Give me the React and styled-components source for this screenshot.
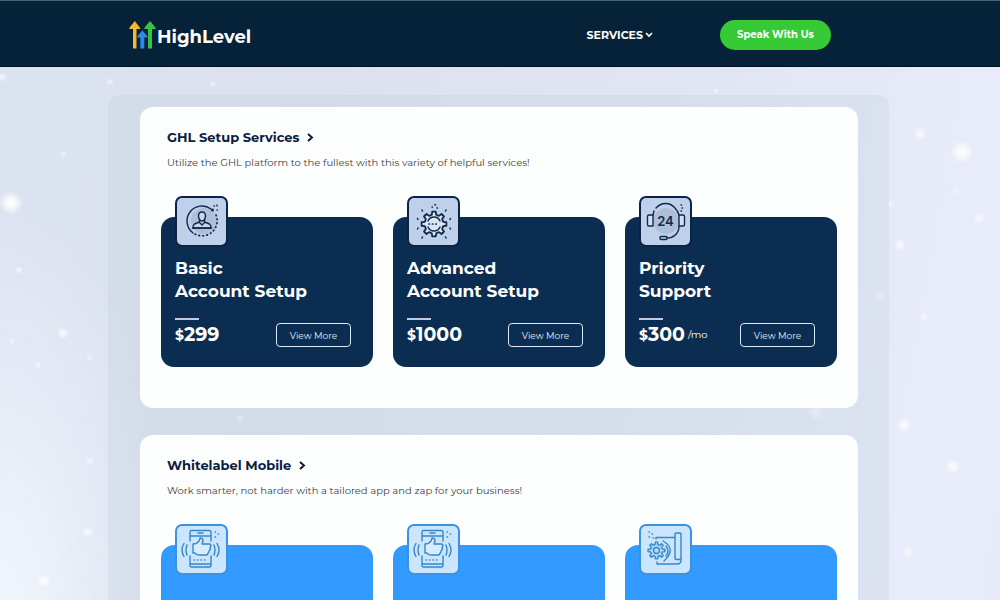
import React from "react";
import styled, { createGlobalStyle } from "styled-components";

const Global = createGlobalStyle`
  *, *::before, *::after { box-sizing: border-box; }
  body {
    margin: 0;
    font-family: Montserrat, Inter, "Open Sans", sans-serif;
    background: #e3e8f5;
  }
  h1, h2, h3, p { margin: 0; }
`;

const sparkles = [
  [2, 77, 5, 0.6], [110, 82, 4, 0.5], [213, 84, 4, 0.4], [63, 154, 4, 0.4],
  [11, 203, 12, 0.9], [19, 270, 4, 0.6], [63, 333, 6, 0.6], [12, 341, 4, 0.4],
  [38, 365, 4, 0.4], [90, 358, 4, 0.4], [157, 406, 4, 0.4], [240, 418, 4, 0.5],
  [90, 461, 5, 0.4], [88, 532, 6, 0.5], [44, 581, 7, 0.7], [716, 91, 3, 0.5],
  [920, 134, 7, 0.6], [962, 152, 12, 0.8], [956, 190, 5, 0.4], [979, 218, 6, 0.5],
  [890, 204, 4, 0.5], [900, 245, 6, 0.6], [880, 296, 7, 0.5], [924, 317, 5, 0.6],
  [904, 425, 8, 0.7], [953, 466, 8, 0.7], [816, 412, 9, 0.5], [908, 552, 7, 0.5],
];

const sparkleLayers = sparkles
  .map(([x, y, r, a]) =>
    `radial-gradient(circle at ${x / 10}% ${y}px, rgba(255,255,255,${a}) 0, rgba(255,255,255,${a}) ${Math.round(r / 4)}px, rgba(255,255,255,0) ${r}px)`)
  .join(",");

const Page = styled.div`
  min-height: 100vh;
  background:
    ${sparkleLayers},
    radial-gradient(ellipse 180px 420px at 0 620px, rgba(242,247,254,0.95) 0, rgba(240,245,253,0) 100%),
    linear-gradient(100deg, #dce3f0 0%, #dbe1ee 30%, #dfe5f1 60%, #e8ebf9 88%, #e7ebf8 100%);
`;

const Header = styled.header`
  display: flex;
  align-items: center;
  justify-content: space-between;
  height: 67px;
  padding: 2px 169px 0 129px;
  background: #062239;
  border-top: 1px solid #4b6673;
  border-bottom: 1px solid #02121f;
`;

const Logo = styled.a`
  display: flex;
  align-items: flex-end;
  gap: 1px;
  color: #fff;
  font-size: 18px;
  font-weight: 700;
  line-height: 23px;
  text-decoration: none;
`;

const Nav = styled.nav`
  display: flex;
  align-items: center;
  gap: 67px;
`;

const MenuButton = styled.button`
  display: flex;
  align-items: center;
  gap: 2px;
  padding: 0;
  border: 0;
  background: none;
  color: #fff;
  font: inherit;
  font-size: 11px;
  font-weight: 700;
`;

const ContactButton = styled.button`
  width: 111px;
  height: 30px;
  padding: 0;
  border: 0;
  border-radius: 15px;
  background: #37ca37;
  color: #fff;
  font: inherit;
  font-size: 10px;
  font-weight: 700;
`;

const Main = styled.main`
  padding: 28px 111px 0 108px;
`;

const Panel = styled.div`
  display: flex;
  flex-direction: column;
  gap: 27px;
  padding: 12px 31px 27px 32px;
  border-radius: 12px;
  background: rgba(190, 203, 220, 0.28);
`;

const Section = styled.section`
  padding: 20px 21px 41px;
  border-radius: 13px;
  background: #fdfefe;
`;

const SectionHead = styled.div`
  padding: 0 6px;
`;

const SectionTitle = styled.h2`
  display: flex;
  align-items: center;
  gap: 8px;
  color: #0c1c3d;
  font-size: 13px;
  font-weight: 700;
  line-height: 20px;
`;

const SectionText = styled.p`
  margin-top: 8px;
  color: #3c3f45;
  font-size: 10px;
  font-weight: 400;
  line-height: 16px;
`;

const Cards = styled.div`
  display: grid;
  grid-template-columns: repeat(3, 1fr);
  align-items: start;
  gap: 20px;
  margin-top: 46px;
`;

const Card = styled.article`
  position: relative;
  min-height: 150px;
  padding: 40px 22px 19px 14px;
  border-radius: 13px;
  background: ${(p) => (p.$tone === "blue" ? "#339aff" : "#0b2d51")};
`;

const IconTile = styled.div`
  position: absolute;
  top: -21px;
  left: 14px;
  width: 53px;
  height: 51px;
  border: 2px solid ${(p) => (p.$tone === "blue" ? "#3a92e4" : "#0b2345")};
  border-radius: 7px;
  background: ${(p) => (p.$tone === "blue" ? "#cae5fd" : "#bfd0ea")};
  color: ${(p) => (p.$tone === "blue" ? "#3488c8" : "#10284c")};
  svg { display: block; width: 49px; height: 47px; }
`;

const CardTitle = styled.h3`
  color: #fff;
  font-size: 17px;
  font-weight: 700;
  line-height: 23px;
`;

const Rule = styled.div`
  width: 24px;
  height: 2px;
  margin-top: 15px;
  background: #c4c9e0;
`;

const Offer = styled.div`
  display: flex;
  align-items: center;
  justify-content: space-between;
  margin-top: 2px;
`;

const Price = styled.p`
  display: flex;
  align-items: center;
  color: #fff;
  font-size: 19px;
  font-weight: 700;
  line-height: 26px;
`;

const Currency = styled.span`
  font-size: 14px;
`;

const Period = styled.span`
  margin-left: 3px;
  font-size: 10px;
  font-weight: 400;
`;

const MoreButton = styled.button`
  width: 75px;
  height: 24px;
  padding: 0;
  border: 1px solid #dce8f5;
  border-radius: 4px;
  background: none;
  color: #e4edf7;
  font: inherit;
  font-size: 9px;
`;

const LogoMark = () => (
  <svg width="27" height="28" viewBox="0 0 27 28" aria-hidden="true">
    <path d="M4 27.500V8H0C1 5 4 3 5.800 0 7.500 3 10.500 5 11.500 8H7.500v19.500z" fill="#f5b72f" />
    <path d="M19 27.500V8h-4c1-3 4-5 6-8 2 3 5 5 6 8h-4v19.500z" fill="#39c344" />
    <path d="M11.300 27.500V16.500H8c1-3 4-4.500 5.300-7.500 1.500 3 4.500 4.500 5.500 7.500h-3.500v11z" fill="#288ced" />
  </svg>
);

const Chevron = ({ down }) => (
  <svg width="8" height="9" viewBox="0 0 8 9" fill="none" stroke="currentColor" strokeWidth="2" aria-hidden="true">
    {down ? <path d="M1 3l3 3 3-3" strokeWidth="1.600" /> : <path d="M1 1l4 3.500L1 8" />}
  </svg>
);

const IconSvg = ({ children }) => (
  <svg viewBox="2 2 49 47" fill="none" stroke="currentColor" strokeWidth="1.400" strokeLinecap="round" strokeLinejoin="round" aria-hidden="true">
    {children}
  </svg>
);

const AccountIcon = () => (
  <IconSvg>
    <circle cx="29" cy="25" r="13" fill="#adbfd9" stroke="none" />
    <path d="M18 37A15 15 0 0 1 36 13" />
    <circle cx="37.500" cy="14" r="1.500" fill="currentColor" stroke="none" />
    <path d="M41 19A15 15 0 0 1 20 38" strokeDasharray=".8 3.200" strokeWidth="1.700" />
    <path d="M24.500 23v3l-5 2q-1.500 1-1.500 4h18q0-3-1.500-4l-5-2v-3z" fill="#c9d7eb" />
    <path d="M27 16c2.500 0 3.500 1.500 3.500 4S29 25 27 25s-3.500-2.500-3.500-5S24.500 16 27 16zM24.500 26.500l2.500 2.500 2.500-2.500" fill="#c9d7eb" />
    <path d="M17.500 32h19" />
    <path d="M39 10h.5M42 9v1M42 14h.5" strokeWidth="1.300" />
  </IconSvg>
);

const toothPath = (cx, cy, outer, inner, teeth) => {
  const points = [];
  const step = (Math.PI * 2) / teeth;
  for (let i = 0; i < teeth; i += 1) {
    const a = i * step - Math.PI / 2;
    [[-0.3, inner], [-0.18, outer], [0.18, outer], [0.3, inner]].forEach(([o, r]) => {
      points.push(`${(cx + r * Math.cos(a + o * step)).toFixed(2)} ${(cy + r * Math.sin(a + o * step)).toFixed(2)}`);
    });
  }
  return `M${points.join("L")}Z`;
};

const GearIcon = () => (
  <IconSvg>
    <path d={toothPath(27, 28, 12.5, 9.5, 8)} fill="#dbe5f3" strokeWidth="1.800" />
    <path d="M21 25a6.500 6.500 0 0 1 12 0M21 31a6.500 6.500 0 0 0 12 0" />
    <path d="M22 28h10" strokeWidth="1.700" strokeDasharray=".4 3" />
    <path d="M15 14l.5 1M39 14l-.5 1M10.500 22.500l.5 1M43.500 22.500l-.5 1M10.500 33l.5-1M43.500 33l-.5-1M15 42l.5-1M39 42l-.5-1M25 11h.5M28 8.500l.5.500M30 12h.5" strokeWidth="1.500" />
  </IconSvg>
);

const SupportIcon = () => (
  <IconSvg>
    <circle cx="27" cy="25" r="13" fill="#adbfd9" stroke="none" />
    <path d="M14 19h-4q-1.500 0-1.500 1.500v8q0 1.500 1.500 1.500h4zM40 19h4q1.500 0 1.500 1.500v8q0 1.500-1.500 1.500h-4z" fill="#d6e1f0" />
    <path d="M17 12c5-6 14-6 18.500-.5Q39 15 40 19M14 19l1-4M40 30c0 8-6 12-12 12" />
    <rect x="21" y="40.500" width="7" height="3" rx="1" />
    <path d="M42 9h.5M43 12h.5M42 15h.5" />
    <text x="26.500" y="29.500" textAnchor="middle" fontFamily="Inter, sans-serif" fontWeight="600" fontSize="13" fill="currentColor" stroke="none">24</text>
  </IconSvg>
);

const PhoneIcon = () => (
  <IconSvg>
    <path d="M15 17V8q0-1.500 1.500-1.500h18Q36 6.500 36 8v9M36 32v9.500q0 1.500-1.500 1.500h-18Q15 43 15 41.500V32M15 12h21M15 40h21M23 9h5" />
    <path d="M18 20q4 0 5-2 2-1 2-4 3 0 3 3l-1 3h7q2 0 2 2 0 1-1 1 1 3-1 4 0 2-1 2 0 2-2 2h-7q-3 0-4-2h-2z" fill="#d7edff" />
    <path d="M19 36h14" strokeDasharray=".5 3" />
    <path d="M12 21q-2 5 0 10M9 19.500q-4 6.500 0 13M39 21q2 5 0 10M42 19.500q4 6.500 0 13" />
    <path d="M40 8h.5M43 10h.5M40 13h.5" />
  </IconSvg>
);

const AutomationIcon = () => (
  <IconSvg>
    <path d="M17 15v-1.500h19M36 34V10q0-1 1-1h4q1 0 1 1v25q-2 1-6 0M42 36q0 4-4 4H18v-2" />
    <path d={toothPath(17.5, 26.5, 8.5, 6, 8)} fill="#b4dafa" />
    <circle cx="17.500" cy="26.500" r="3" />
    <path d="M24 17q14 8 1 20M27 22q4 5 0 10" />
    <path d="M10 8h.5M13 10h.5M10 13h.5M14 14h.5" />
  </IconSvg>
);

const setupServices = [
  { title: ["Basic", "Account Setup"], price: "299", Icon: AccountIcon },
  { title: ["Advanced", "Account Setup"], price: "1000", Icon: GearIcon },
  { title: ["Priority", "Support"], price: "300", period: "/mo", Icon: SupportIcon },
];

const mobileServices = [PhoneIcon, PhoneIcon, AutomationIcon];

const ServiceSection = ({ title, text, children }) => (
  <Section>
    <SectionHead>
      <SectionTitle>{title}<Chevron /></SectionTitle>
      <SectionText>{text}</SectionText>
    </SectionHead>
    <Cards>{children}</Cards>
  </Section>
);

export default function App() {
  return (
    <Page>
      <Global />
      <Header>
        <Logo href="#"><LogoMark />HighLevel</Logo>
        <Nav>
          <MenuButton type="button">SERVICES<Chevron down /></MenuButton>
          <ContactButton type="button">Speak With Us</ContactButton>
        </Nav>
      </Header>
      <Main>
        <Panel>
          <ServiceSection title="GHL Setup Services" text="Utilize the GHL platform to the fullest with this variety of helpful services!">
            {setupServices.map(({ title, price, period, Icon }) => (
              <Card key={price}>
                <IconTile><Icon /></IconTile>
                <CardTitle>{title[0]}<br />{title[1]}</CardTitle>
                <Rule />
                <Offer>
                  <Price><Currency>$</Currency>{price}{period && <Period>{period}</Period>}</Price>
                  <MoreButton type="button">View More</MoreButton>
                </Offer>
              </Card>
            ))}
          </ServiceSection>
          <ServiceSection title="Whitelabel Mobile" text="Work smarter, not harder with a tailored app and zap for your business!">
            {mobileServices.map((Icon, i) => (
              <Card key={i} $tone="blue">
                <IconTile $tone="blue"><Icon /></IconTile>
              </Card>
            ))}
          </ServiceSection>
        </Panel>
      </Main>
    </Page>
  );
}
